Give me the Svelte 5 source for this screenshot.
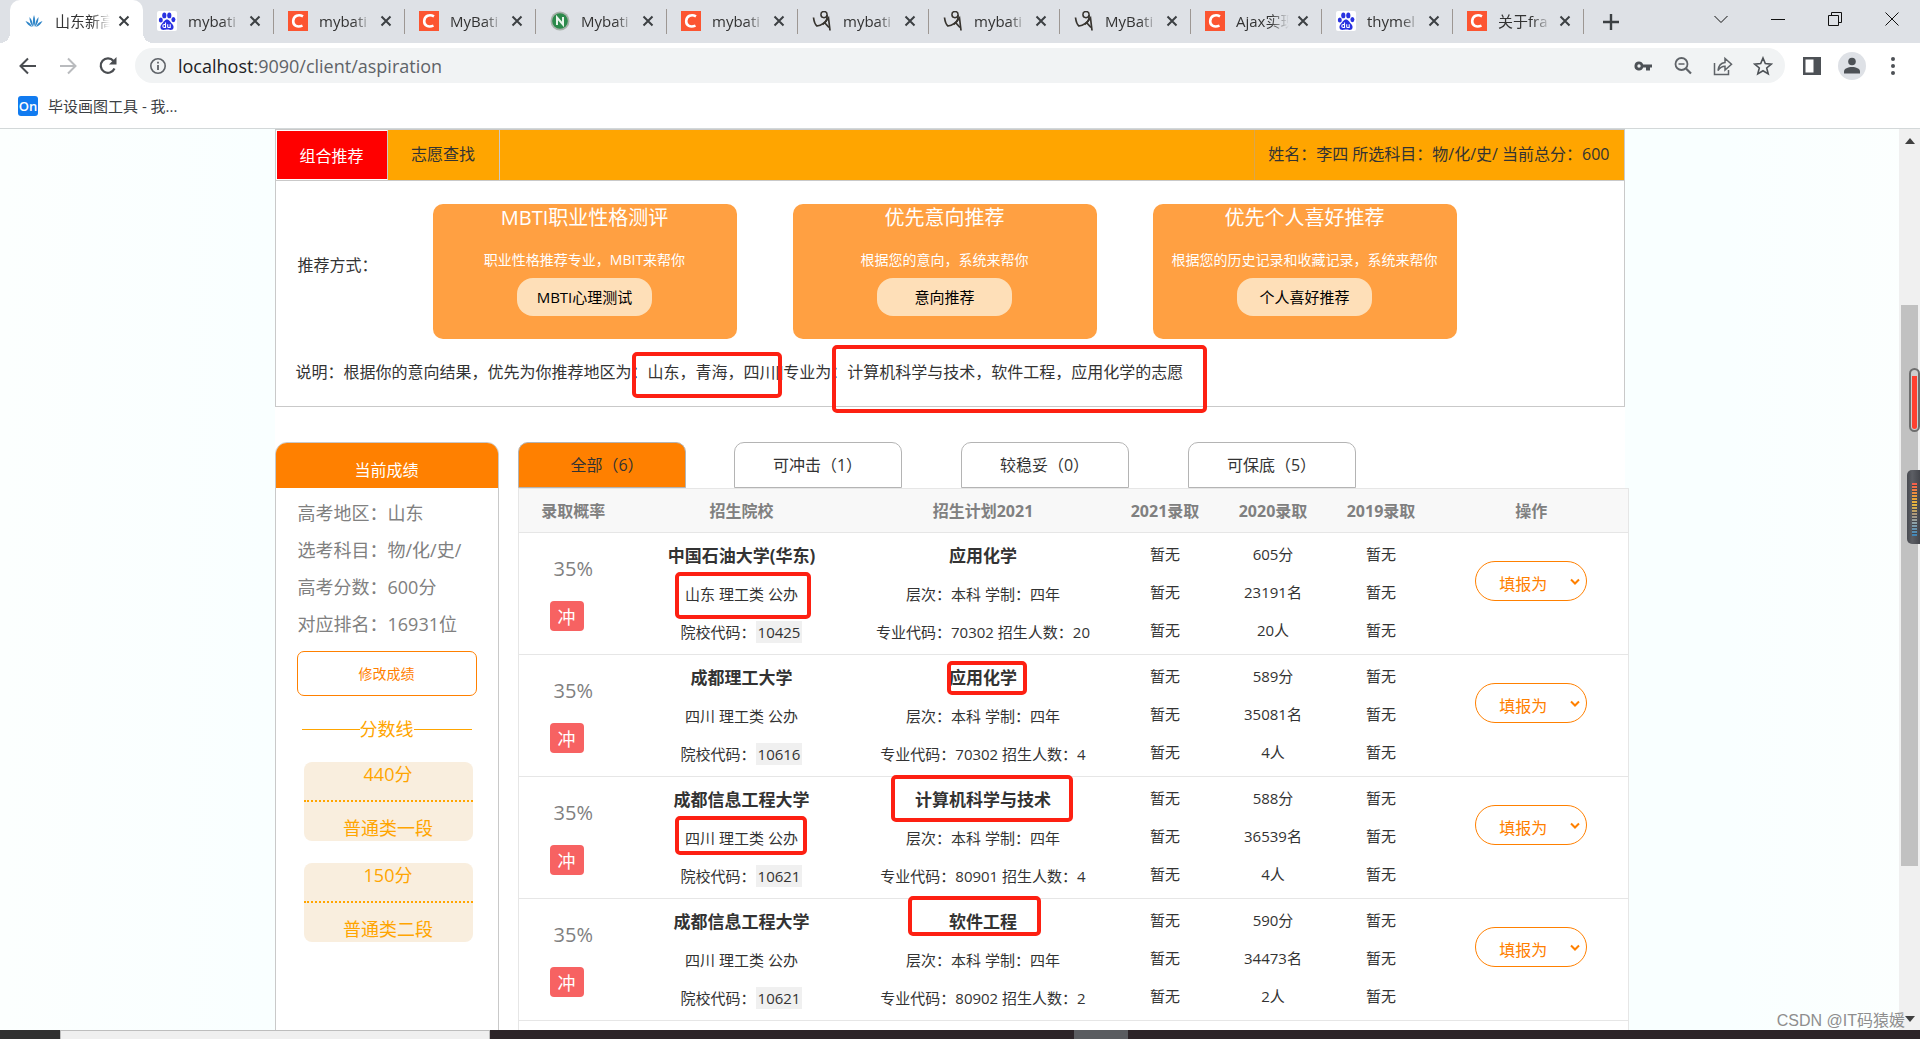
<script>
  const tabs = [
    { icon: 'leaf', title: '山东新高', active: true },
    { icon: 'paw', title: 'mybati' },
    { icon: 'c', title: 'mybati' },
    { icon: 'c', title: 'MyBati' },
    { icon: 'n', title: 'Mybati' },
    { icon: 'c', title: 'mybati' },
    { icon: 'bird', title: 'mybati' },
    { icon: 'bird', title: 'mybati' },
    { icon: 'bird', title: 'MyBati' },
    { icon: 'c', title: 'Ajax实现' },
    { icon: 'paw', title: 'thymel' },
    { icon: 'c', title: '关于fra' }
  ];

  const cards = [
    { title: 'MBTI职业性格测评', text: '职业性格推荐专业，MBIT来帮你', button: 'MBTI心理测试' },
    { title: '优先意向推荐', text: '根据您的意向，系统来帮你', button: '意向推荐' },
    { title: '优先个人喜好推荐', text: '根据您的历史记录和收藏记录，系统来帮你', button: '个人喜好推荐' }
  ];

  const filters = ['全部（6）', '可冲击（1）', '较稳妥（0）', '可保底（5）'];
  const heads = ['录取概率', '招生院校', '招生计划2021', '2021录取', '2020录取', '2019录取', '操作'];
  const lines = [
    { score: '440分', name: '普通类一段' },
    { score: '150分', name: '普通类二段' }
  ];

  const rows = [
    { school: '中国石油大学(华东)', area: '山东', code: '10425', major: '应用化学', majorCode: '70302', plan: 20, y2020: ['605分', '23191名', '20人'] },
    { school: '成都理工大学', area: '四川', code: '10616', major: '应用化学', majorCode: '70302', plan: 4, y2020: ['589分', '35081名', '4人'] },
    { school: '成都信息工程大学', area: '四川', code: '10621', major: '计算机科学与技术', majorCode: '80901', plan: 4, y2020: ['588分', '36539名', '4人'] },
    { school: '成都信息工程大学', area: '四川', code: '10621', major: '软件工程', majorCode: '80902', plan: 2, y2020: ['590分', '34473名', '2人'] }
  ];
  const none = ['暂无', '暂无', '暂无'];

  // Highlight boxes drawn over the page: x, y, width, height
  const marks = [
    [357, 223, 150, 46],
    [557, 216, 375, 68],
    [400, 443, 136, 47],
    [672, 532, 80, 34],
    [616, 646, 182, 47],
    [400, 687, 132, 39],
    [633, 767, 133, 40]
  ];
</script>

{#snippet favicon(kind)}
  {#if kind === 'leaf'}
    <svg class="fav" viewBox="0 0 20 20"><g fill="#2f86c8"><path d="M10 16C8.500 12 8.500 8 10 4c1.500 4 1.500 8 0 12z" /><path d="M9 16C6.500 13 5.500 10 5.500 6 8 9 9 12 9 16z" /><path d="M11 16c2.500-3 3.500-6 3.500-10C12 9 11 12 11 16z" /><path d="M8 16c-3-1-5-3-6.500-6C5 11 7 13 8 16z" /><path d="M12 16c3-1 5-3 6.500-6C15 11 13 13 12 16z" /></g></svg>
  {:else if kind === 'paw'}
    <svg class="fav" viewBox="0 0 20 20"><rect width="20" height="20" rx="2" fill="#fff" /><g fill="#2932e1"><ellipse cx="3.800" cy="9" rx="2" ry="2.600" /><ellipse cx="7.300" cy="4.400" rx="2.100" ry="2.900" /><ellipse cx="12.300" cy="4.400" rx="2.100" ry="2.900" /><ellipse cx="16.400" cy="8.600" rx="2" ry="2.600" /><path d="M10 8.500c2.500 0 3 2.500 5 4.200 2.500 2.200 2 6.300-1.500 6.300-1.500 0-2-.4-3.500-.4s-2 .4-3.500.4C3 19 2.500 15 5 12.700c2-1.700 2.500-4.200 5-4.200z" /></g><path d="M8.500 11.500v5H7.300a1.500 1.500 0 0 1 0-3h1.200M10.700 13.300v2.400q0 .8.900.8h1.600v-3.200" fill="none" stroke="#fff" stroke-width="1.100" /></svg>
  {:else if kind === 'c'}
    <svg class="fav" viewBox="0 0 20 20"><rect width="20" height="20" fill="#fc5531" /><path d="M15 5.400C10.500 2.800 5.500 4.800 5.200 10c-.2 4.800 4.200 6.700 9.300 4.600" fill="none" stroke="#fff" stroke-width="2.600" /></svg>
  {:else if kind === 'n'}
    <svg class="fav" viewBox="0 0 20 20"><circle cx="10" cy="10" r="9.500" fill="#a7b1a9" /><circle cx="10" cy="10" r="7.800" fill="#2c8a4b" /><path d="M7 14V6.500l6 7V6" fill="none" stroke="#e8f4ea" stroke-width="2" /></svg>
  {:else}
    <svg class="fav" viewBox="0 0 20 20" fill="none" stroke="#37342f"><circle cx="12" cy="3.600" r="3.100" stroke-width="1.500" /><path d="M15 4c.5 4-1 7.500-4.500 9.500" stroke-width="1.700" /><path d="M1.500 6.500c.5 4 1.500 7 3.500 8.500 4-.5 8-3 11.500-8l1.500 12.500" stroke-width="1.700" /><path d="M12.500 11.500l4.500 5" stroke-width="1.800" /></svg>
  {/if}
{/snippet}

<div class="window">
  <header>
    <div class="tabstrip">
      {#each tabs as tab}
        <div class="tab" class:active={tab.active}>
          {@render favicon(tab.icon)}
          <span class="tab-title">{tab.title}</span>
          <button class="close" aria-label="关闭标签页"><svg width="12" height="12" viewBox="0 0 12 12"><path d="M1.500 1.500l9 9M10.500 1.500l-9 9" stroke="#3c4043" stroke-width="2" /></svg></button>
        </div>
      {/each}
      <button class="new-tab" aria-label="新标签页"><svg width="16" height="16" viewBox="0 0 16 16"><path d="M8 0v16M0 8h16" stroke="#3c4043" stroke-width="2.400" /></svg></button>
      <div class="window-buttons">
        <button aria-label="搜索标签页"><svg width="14" height="14" viewBox="0 0 14 14"><path d="M.5 4L7 10.500 13.500 4" /></svg></button>
        <button aria-label="最小化"><svg width="14" height="14" viewBox="0 0 14 14"><path d="M0 7.500h14" /></svg></button>
        <button aria-label="还原"><svg width="14" height="14" viewBox="0 0 14 14"><path d="M.5 3.500h10v10H.5zM3.500 3.500v-3h10v10h-3" /></svg></button>
        <button aria-label="关闭"><svg width="14" height="14" viewBox="0 0 14 14"><path d="M.5.5l13 13M13.500.5l-13 13" /></svg></button>
      </div>
    </div>

    <div class="toolbar">
      <button aria-label="后退"><svg width="20" height="20" viewBox="0 0 20 20"><path d="M18 10H3M10 2.500L2.500 10l7.500 7.500" fill="none" stroke="#4a4d51" stroke-width="2" /></svg></button>
      <button aria-label="前进"><svg width="20" height="20" viewBox="0 0 20 20"><path d="M2 10h15M10 2.500l7.500 7.500-7.500 7.500" fill="none" stroke="#b9bbbe" stroke-width="2" /></svg></button>
      <button aria-label="刷新"><svg width="20" height="20" viewBox="0 0 20 20"><path d="M16.500 12.500A7.200 7.200 0 1 1 15.500 5" fill="none" stroke="#4a4d51" stroke-width="2.200" /><path d="M18.500 1v7.500H11z" fill="#4a4d51" /></svg></button>
      <div class="omnibox">
        <svg width="18" height="18" viewBox="0 0 18 18"><circle cx="9" cy="9" r="7.200" fill="none" stroke="#5f6368" stroke-width="1.600" /><path d="M9 8v5M9 4.800v1.800" stroke="#5f6368" stroke-width="1.800" /></svg>
        <a class="url" href="http://localhost:9090/client/aspiration">localhost<span>:9090/client/aspiration</span></a>
        <div class="box-icons">
          <button aria-label="密码"><svg width="20" height="20" viewBox="0 0 20 20"><path d="M6 5.500a4.500 4.500 0 1 0 4.200 6H13V14.500h4v-3h2v-3h-8.800A4.500 4.500 0 0 0 6 5.500zm0 2.800a1.700 1.700 0 1 1 0 3.400 1.700 1.700 0 0 1 0-3.400z" fill="#4d5156" fill-rule="evenodd" /></svg></button>
          <button aria-label="缩放"><svg width="20" height="20" viewBox="0 0 20 20" fill="none" stroke="#5f6368"><circle cx="8.500" cy="8" r="6" stroke-width="1.800" /><path d="M5.500 8h6" stroke-width="1.500" /><path d="M13 12.500l5 5" stroke-width="2.200" /></svg></button>
          <button aria-label="分享"><svg width="20" height="20" viewBox="0 0 20 20" fill="none" stroke="#5f6368" stroke-width="1.500"><path d="M1.500 7v11.500h14V14" /><path d="M5 14.500c.5-5 3-7.500 7-8V2.500l6.500 5.700L12 14v-3.800c-3 0-5 1-7 4.300z" /></svg></button>
          <button aria-label="收藏"><svg width="20" height="20" viewBox="0 0 20 20"><path d="M10 2l2.300 5.600 6 .5-4.600 3.900 1.500 5.900L10 14.700l-5.200 3.200L6.300 12 1.700 8.100l6-.5z" fill="none" stroke="#4d5156" stroke-width="1.600" /></svg></button>
        </div>
      </div>
      <button class="side" aria-label="侧边栏"><svg width="18" height="18" viewBox="0 0 18 18"><path d="M0 0h18v18H0zM2.500 2.500v13h8v-13z" fill="#4d5156" fill-rule="evenodd" /></svg></button>
      <button class="avatar" aria-label="用户"><svg width="28" height="28" viewBox="0 0 28 28"><circle cx="14" cy="14" r="14" fill="#dee1e6" /><circle cx="14" cy="9.500" r="3.800" fill="#4d5156" /><path d="M6 21.500v-2c0-3 4-4.500 8-4.500s8 1.500 8 4.500v2z" fill="#4d5156" /></svg></button>
      <button class="more" aria-label="更多"><svg width="4" height="18" viewBox="0 0 4 18" fill="#4d5156"><circle cx="2" cy="2" r="2" /><circle cx="2" cy="9" r="2" /><circle cx="2" cy="16" r="2" /></svg></button>
    </div>

    <nav class="bookmarks">
      <a href="#tools"><span class="on">On</span>毕设画图工具 - 我...</a>
    </nav>
  </header>

  <div class="viewport">
    <main>
      <section class="panel">
        <div class="bar">
          <button class="mode current">组合推荐</button>
          <button class="mode">志愿查找</button>
          <p class="who">姓名：李四 所选科目：物/化/史/ 当前总分：600</p>
        </div>
        <div class="ways">
          <span class="way-label">推荐方式：</span>
          {#each cards as card}
            <article class="card">
              <h2>{card.title}</h2>
              <p>{card.text}</p>
              <button>{card.button}</button>
            </article>
          {/each}
        </div>
        <p class="note">说明：根据你的意向结果，优先为你推荐地区为：山东，青海，四川<span>||</span>专业为：计算机科学与技术，软件工程，应用化学的志愿</p>
      </section>

      <div class="columns">
        <aside>
          <h3>当前成绩</h3>
          <ul>
            <li>高考地区：山东</li>
            <li>选考科目：物/化/史/</li>
            <li>高考分数：600分</li>
            <li>对应排名：16931位</li>
          </ul>
          <button class="edit">修改成绩</button>
          <div class="divider">分数线</div>
          {#each lines as line}
            <div class="line">
              <span>{line.score}</span>
              <span>{line.name}</span>
            </div>
          {/each}
        </aside>

        <section class="results">
          <div class="filters">
            {#each filters as name, i}
              <button class:on={i === 0}>{name}</button>
            {/each}
          </div>
          <table>
            <colgroup>
              <col class="c-rate" /><col class="c-school" /><col class="c-plan" /><col class="c-year" /><col class="c-year" /><col class="c-year" /><col />
            </colgroup>
            <thead>
              <tr>{#each heads as head}<th>{head}</th>{/each}</tr>
            </thead>
            <tbody>
              {#each rows as row}
                <tr>
                  <td class="rate"><span class="percent">35%</span><span class="badge">冲</span></td>
                  <td class="info">
                    <strong>{row.school}</strong>
                    <p>{row.area} 理工类 公办</p>
                    <p>院校代码：<span class="code">{row.code}</span></p>
                  </td>
                  <td class="info">
                    <strong>{row.major}</strong>
                    <p>层次：本科 学制：四年</p>
                    <p>专业代码：{row.majorCode} 招生人数：{row.plan}</p>
                  </td>
                  {#each [none, row.y2020, none] as year}
                    <td class="year">{#each year as value}<p>{value}</p>{/each}</td>
                  {/each}
                  <td class="action">
                    <div class="pick">
                      <select aria-label="填报为"><option>填报为</option></select>
                      <svg width="10" height="8" viewBox="0 0 10 8"><path d="M1 1.500l4 4 4-4" /></svg>
                    </div>
                  </td>
                </tr>
              {/each}
              <tr><td colspan="7"></td></tr>
            </tbody>
          </table>
        </section>
      </div>

      {#each marks as [x, y, w, h]}
        <div class="mark" style="left:{x}px;top:{y}px;width:{w}px;height:{h}px"></div>
      {/each}
    </main>

    <div class="scrollbar">
      <svg width="10" height="6" viewBox="0 0 10 6"><path d="M0 6l5-6 5 6z" fill="#404040" /></svg>
      <div class="thumb"></div>
      <svg width="10" height="6" viewBox="0 0 10 6"><path d="M0 0l5 6 5-6z" fill="#404040" /></svg>
    </div>
    <div class="gauge"></div>
    <div class="meter"><i></i></div>
    <span class="watermark">CSDN @IT码猿媛</span>
  </div>

  <footer><i class="dark"></i><i class="search"></i><i class="gap"></i><i class="app"></i></footer>
</div>

<style>
  :global(body) {
    margin: 0;
    overflow: hidden;
  }
  .window {
    height: 100vh;
    display: flex;
    flex-direction: column;
    overflow: hidden;
    font-family: 'Open Sans', 'Noto Sans CJK SC', sans-serif;
    font-size: 16px;
    line-height: 24px;
    color: #333;
    background: #fff;
  }
  .window * {
    box-sizing: border-box;
  }
  button {
    font: inherit;
    color: inherit;
    border: 0;
    padding: 0;
    background: none;
  }
  header button {
    display: grid;
    place-items: center;
  }
  p, h2, h3, ul {
    margin: 0;
    padding: 0;
    font-weight: normal;
    list-style: none;
  }
  header {
    flex: none;
    border-bottom: 1px solid #d3d8d9;
  }

  .tabstrip {
    display: flex;
    align-items: center;
    height: 43px;
    padding-left: 10px;
    background: #dee1e6;
  }
  .tab {
    flex: none;
    display: flex;
    align-items: center;
    width: 131px;
    height: 43px;
    padding: 0 12px 2px 14px;
    position: relative;
    font-size: 15px;
  }
  .tab:not(.active)::after {
    content: '';
    position: absolute;
    right: 0;
    top: 9px;
    width: 1px;
    height: 25px;
    background: #9d9793;
  }
  .tab.active {
    width: 133px;
    background: #fff;
    border-radius: 10px 10px 0 0;
  }
  .tab.active::before,
  .tab.active::after {
    content: '';
    position: absolute;
    bottom: 0;
    width: 10px;
    height: 10px;
  }
  .tab.active::before {
    left: -10px;
    background: radial-gradient(circle at 0 0, #dee1e6 10px, #fff 10px);
  }
  .tab.active::after {
    right: -10px;
    background: radial-gradient(circle at 100% 0, #dee1e6 10px, #fff 10px);
  }
  .fav {
    flex: none;
    width: 20px;
    height: 20px;
  }
  .tab-title {
    flex: 1;
    margin-left: 11px;
    overflow: hidden;
    white-space: nowrap;
    mask-image: linear-gradient(90deg, #000 65%, transparent);
  }
  .close {
    margin-left: 7px;
    width: 14px;
    height: 14px;
  }
  .new-tab {
    width: 16px;
    margin-left: 19px;
  }
  .window-buttons {
    display: flex;
    align-self: flex-start;
    margin-left: auto;
  }
  .window-buttons button {
    width: 57px;
    height: 37px;
  }
  .window-buttons path {
    fill: none;
    stroke: #111;
  }

  .toolbar {
    display: flex;
    align-items: center;
    height: 45px;
    padding: 0 20px 0 18px;
  }
  .toolbar > button {
    flex: none;
    width: 20px;
    margin-right: 20px;
  }
  .omnibox {
    flex: 1;
    display: flex;
    align-items: center;
    height: 35px;
    margin-left: -3px;
    padding: 0 12px 0 14px;
    border-radius: 18px;
    background: #f1f3f4;
  }
  .url {
    margin-left: 11px;
    font-size: 18px;
    color: #202124;
    text-decoration: none;
  }
  .url span {
    color: #5f6368;
  }
  .box-icons {
    display: flex;
    gap: 20px;
    margin-left: auto;
  }
  .toolbar > .side {
    margin: 0 16px 0 17px;
  }
  .toolbar > .avatar {
    width: 28px;
    margin-right: 24px;
  }
  .toolbar > .more {
    width: 6px;
    margin-right: 4px;
  }
  .bookmarks {
    height: 40px;
    padding: 5px 18px;
    font-size: 15px;
  }
  .bookmarks a {
    display: inline-flex;
    align-items: center;
    color: #3c4043;
    text-decoration: none;
  }
  .bookmarks .on {
    width: 20px;
    margin-right: 10px;
    border-radius: 3px;
    line-height: 20px;
    text-align: center;
    font-size: 13px;
    font-weight: 600;
    color: #fff;
    background: #117bf0;
  }

  .viewport {
    flex: 1;
    min-height: 0;
    display: flex;
    position: relative;
    overflow: hidden;
    background: linear-gradient(90deg, #fcfffe, #f9ffff 14%, #f9ffff 90%, #fcfffe);
  }
  main {
    flex: none;
    width: 1350px;
    max-width: calc(100% - 21px);
    margin: 0 auto;
    position: relative;
    background: #fff;
  }
  .panel {
    border: 1px solid #c9c9c9;
  }
  .bar {
    display: flex;
    height: 51px;
    border-bottom: 1px solid #c9c9c9;
    background: #ffa500;
  }
  .mode {
    width: 112px;
    padding-bottom: 2px;
    border-right: 1px solid #c9c9c9;
  }
  .mode.current {
    padding: 1px 0 0;
    border: 1px solid #fff;
    border-right-color: #c9c9c9;
    color: #fff;
    background: #f00;
  }
  .who {
    margin-left: auto;
    padding: 12px 14px 12px 13px;
    border-left: 1px solid #dba64a;
  }
  .ways {
    display: flex;
    gap: 56px;
    padding: 23px 0 0 22px;
  }
  .way-label {
    width: 79px;
    align-self: center;
    white-space: nowrap;
    padding-bottom: 14px;
  }
  .card {
    width: 304px;
    height: 135px;
    border-radius: 10px;
    text-align: center;
    color: #fff;
    background: #ffa042;
  }
  .card h2 {
    font-size: 20px;
    line-height: 28px;
  }
  .card p {
    margin: 16px 0 6px;
    font-size: 14px;
  }
  .card button {
    width: 135px;
    height: 38px;
    border-radius: 16px;
    font-size: 15px;
    color: #000;
    background: #fedfb8;
  }
  .note {
    padding: 21px 20px;
    white-space: nowrap;
  }
  .note span {
    font-family: Roboto, sans-serif;
  }

  .columns {
    display: flex;
    gap: 19px;
    margin-top: 35px;
  }
  aside {
    flex: none;
    width: 224px;
    min-height: 640px;
    border: 1px solid #c9c9c9;
    border-radius: 12px 12px 0 0;
    overflow: hidden;
  }
  h3 {
    height: 45px;
    padding-top: 15px;
    text-align: center;
    font-size: 16px;
    color: #fff;
    background: #ff8000;
  }
  ul {
    padding: 7px 22px 8px;
    font-size: 18px;
    line-height: 37px;
    color: #808080;
  }
  .edit {
    display: block;
    width: 180px;
    height: 45px;
    margin: 0 auto;
    border: 1px solid #ff8000;
    border-radius: 7px;
    font-size: 14px;
    color: #ff8000;
  }
  .divider {
    display: flex;
    align-items: center;
    margin: 21px 26px;
    font-size: 18px;
    color: #ffa500;
  }
  .divider::before,
  .divider::after {
    content: '';
    flex: 1;
    height: 1px;
    background: #ffa500;
  }
  .line {
    display: flex;
    flex-direction: column;
    height: 79px;
    margin: 0 25px 22px 28px;
    border-radius: 8px;
    text-align: center;
    font-size: 18px;
    color: #ffa500;
    background: #f9eede;
  }
  .line span:first-child {
    height: 40px;
    border-bottom: 2px dotted #ffa500;
  }
  .line span:last-child {
    padding-top: 14px;
  }

  .results {
    flex: none;
    width: 1111px;
  }
  .filters {
    display: flex;
    height: 46px;
    gap: 59px;
  }
  .filters button {
    width: 168px;
    border: 1px solid #b4b4b4;
    border-radius: 10px 10px 0 0;
    background: #fff;
  }
  .filters .on {
    margin-right: -11px;
    padding-left: 11px;
    background: #ff8000;
  }
  table {
    width: 100%;
    table-layout: fixed;
    border-collapse: collapse;
    border: 1px solid #e6e6e6;
    background: #fff;
  }
  .c-rate { width: 110px; }
  .c-school { width: 227px; }
  .c-plan { width: 256px; }
  .c-year { width: 108px; }
  th {
    height: 44px;
    padding: 0;
    color: #808080;
    background: #f8f8f8;
  }
  tr {
    border-bottom: 1px solid #e6e6e6;
  }
  td {
    height: 122px;
    padding: 0;
    vertical-align: top;
    text-align: center;
    font-size: 15px;
  }
  .percent {
    display: block;
    padding-top: 24px;
    font-size: 20px;
    color: #808080;
  }
  .badge {
    display: block;
    width: 34px;
    height: 30px;
    margin: 20px auto 0 31px;
    padding-top: 4px;
    border-radius: 4px;
    font-size: 18px;
    color: #fff;
    background: #f76262;
  }
  .info {
    padding-top: 11px;
  }
  .info strong {
    font-size: 17px;
  }
  .info p {
    margin-top: 14px;
  }
  .code {
    display: inline-block;
    padding: 0 2px;
    line-height: 22px;
    background: #f0f0f0;
  }
  .year p {
    margin-top: 14px;
  }
  .year p:first-child {
    margin-top: 9px;
  }
  .pick {
    position: relative;
    width: 112px;
    margin: 28px auto 0;
  }
  select {
    appearance: none;
    width: 100%;
    height: 40px;
    padding: 5px 23px 0;
    border: 1px solid #ff8000;
    border-radius: 20px;
    font: inherit;
    font-size: 16px;
    color: #ff8000;
    background: #fff;
  }
  .pick svg {
    position: absolute;
    right: 7px;
    top: 17px;
  }
  .pick path {
    fill: none;
    stroke: #ff8000;
    stroke-width: 2;
  }
  .mark {
    position: absolute;
    border: 4px solid #fd2012;
    border-radius: 5px;
  }

  .scrollbar {
    flex: none;
    display: flex;
    flex-direction: column;
    align-items: center;
    width: 21px;
    padding: 9px 2px 8px;
    background: #f0f0f0;
  }
  .thumb {
    width: 17px;
    height: 561px;
    margin: 161px 0 auto;
    background: #c1c1c1;
  }
  .gauge {
    position: absolute;
    right: 0;
    top: 239px;
    width: 11px;
    height: 64px;
    border: 2px solid #6e6e6e;
    border-radius: 6px;
    padding: 6px 1px 1px;
    background: linear-gradient(#ff4030, #ff4030) content-box, #cfcfcf;
  }
  .meter {
    position: absolute;
    right: 0;
    top: 341px;
    width: 13px;
    height: 74px;
    padding: 13px 3px 8px 5px;
    border-radius: 5px 0 0 5px;
    background: linear-gradient(90deg, #484a50, #5c5e64 40%, #44464c);
  }
  .meter i {
    display: block;
    height: 100%;
    background: repeating-linear-gradient(transparent 0 2px, #44464c 2px 3px), linear-gradient(#f45b4c, #e89a3c 25%, #e8b83c 40%, #a9957c 60%, #8fa3a8 75%, #3c84b8);
  }
  .watermark {
    position: absolute;
    right: 15px;
    bottom: -3px;
    font-family: 'Liberation Sans', 'Noto Sans CJK SC', sans-serif;
    color: #8e8e8e;
  }
  footer {
    flex: none;
    display: flex;
    height: 9px;
    background: #2c2428;
  }
  .dark {
    width: 60px;
    background: #303030;
  }
  .search {
    width: 430px;
    border: 1px solid #bdbdbd;
    border-bottom: 0;
    background: #efefef;
  }
  .gap { width: 584px; }
  .app {
    width: 54px;
    background: #5a5c60;
  }
</style>
